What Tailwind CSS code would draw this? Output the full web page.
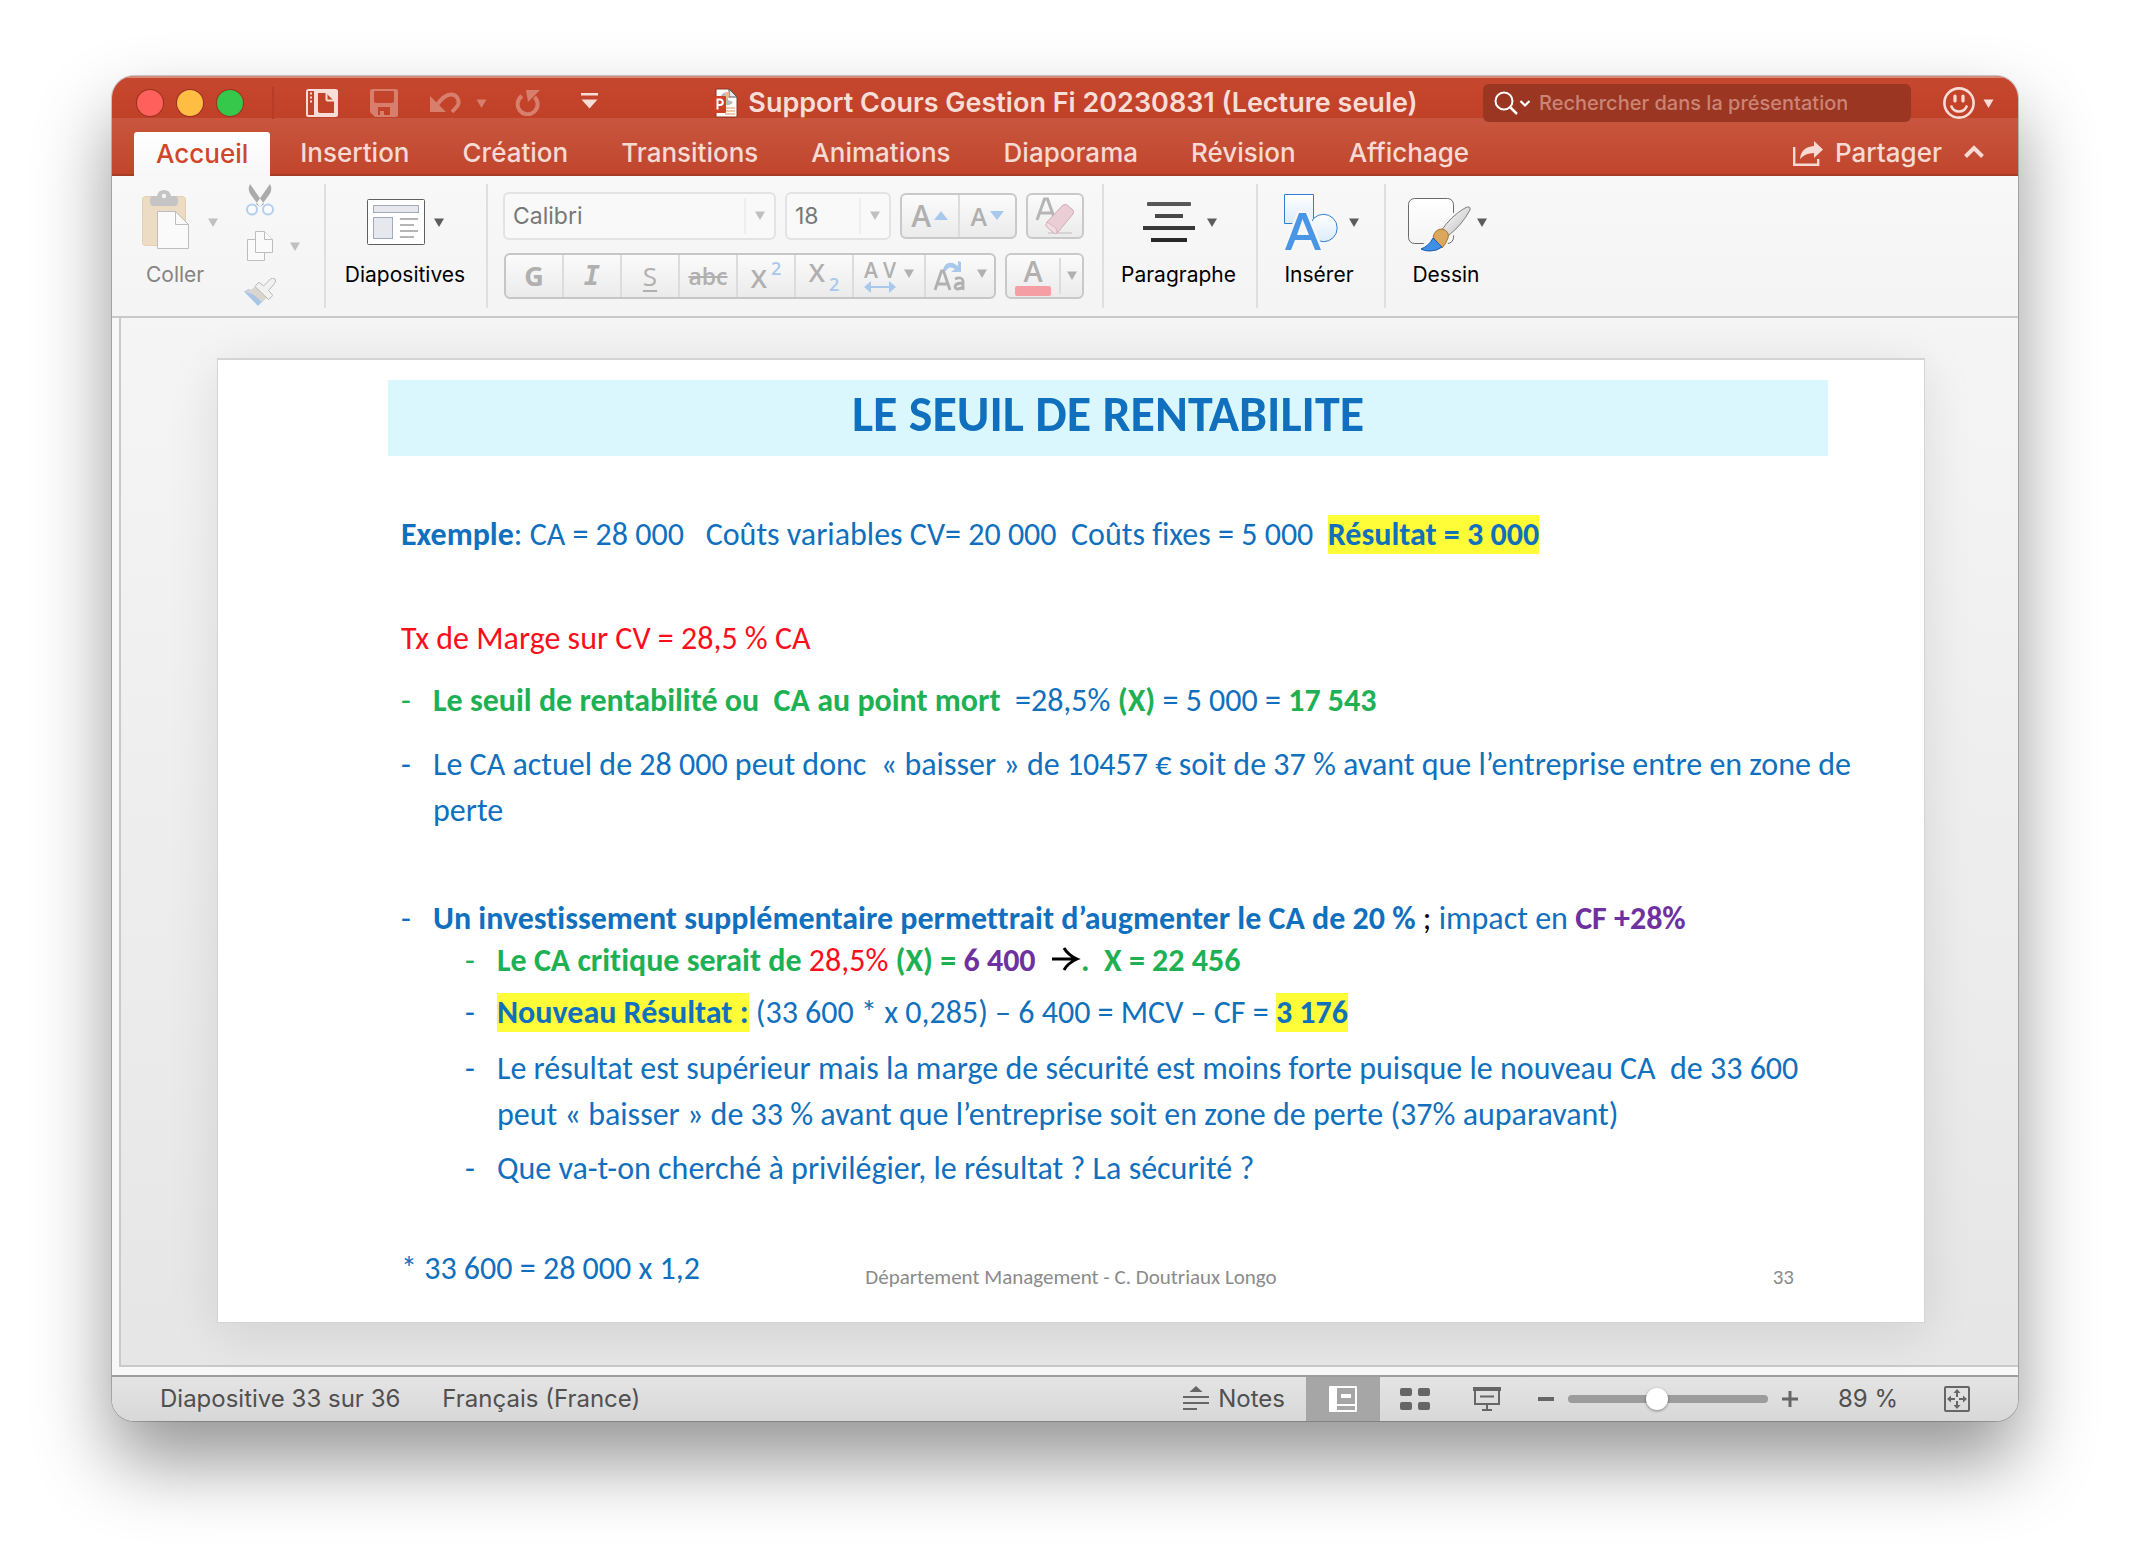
<!DOCTYPE html>
<html lang="fr">
<head>
<meta charset="utf-8">
<meta name="viewport" content="width=device-width, initial-scale=1">
<title>Support Cours Gestion Fi 20230831</title>
<script src="https://cdn.jsdelivr.net/npm/@tailwindcss/browser@4"></script>
</head>
<body class="min-h-screen bg-white px-28 pt-[76px] pb-[147px] font-[Inter,Roboto,sans-serif]">
<svg class="absolute size-0" aria-hidden="true">
  <defs>
    <symbol id="caret" viewBox="0 0 10 9"><path d="M0 .5h10L5 9z" fill="currentColor"/></symbol>
    <linearGradient id="paper" x1="0" y1="0" x2="0" y2="1"><stop offset="0" stop-color="#fff"/><stop offset="1" stop-color="#f4f4f4"/></linearGradient>
    <linearGradient id="sky" x1="0" y1="0" x2="0" y2="1"><stop offset="0" stop-color="#fff"/><stop offset="1" stop-color="#dcebfa"/></linearGradient>
    <linearGradient id="ink" x1="0" y1="0" x2="0" y2="1"><stop offset="0" stop-color="#5a5a5a"/><stop offset="1" stop-color="#262626"/></linearGradient>
    <linearGradient id="handle" x1="0" y1="0" x2="1" y2="1"><stop offset="0" stop-color="#fff"/><stop offset="1" stop-color="#bdbdbd"/></linearGradient>
  </defs>
</svg>

<div class="overflow-visible rounded-[22px] shadow-[0_0_0_1px_rgba(0,0,0,0.2),0_40px_76px_rgba(0,0,0,0.42)]">
<div class="overflow-hidden rounded-[22px]">

  <!-- Title bar -->
  <header class="relative z-10 flex h-[42px] items-center bg-linear-to-b from-[#c5482e] to-[#c14028] pt-3 pr-6 pl-[25px] text-[#f8ddd6] shadow-[inset_0_2px_0_#d98a7a]">
    <div class="flex flex-1 items-center">
      <div class="flex gap-[14px]">
        <button aria-label="Fermer" class="size-[26px] rounded-full bg-[#ff605c] shadow-[0_0_0_1px_#9b3320]"></button>
        <button aria-label="Réduire" class="size-[26px] rounded-full bg-[#ffbd44] shadow-[0_0_0_1px_#9b3320]"></button>
        <button aria-label="Agrandir" class="size-[26px] rounded-full bg-[#35c84b] shadow-[0_0_0_1px_#9b3320]"></button>
      </div>
      <span class="ml-[29px] h-8 w-[2px] bg-[#b53c25]"></span>
      <button aria-label="Volet" class="ml-8">
        <svg width="32" height="28" viewBox="0 0 32 28"><rect width="32" height="28" rx="2.500" fill="#f8ddd6"/><path d="M2 2h6v24H2z" fill="#c2432a"/><path d="M4 3.500h2v2H4zM4 7.500h2v2H4zM4 11.500h2v2H4z" fill="#f8ddd6"/><path d="M12 4h8l8 8v12H14q-2 0-2-2z" fill="#c2432a"/><path d="M20.500 3.500v7q0 1 1 1h7" fill="none" stroke="#f8ddd6" stroke-width="2"/></svg>
      </button>
      <button aria-label="Enregistrer" class="ml-8 text-[#d77e6c]">
        <svg width="28" height="28" viewBox="0 0 28 28"><path fill="currentColor" fill-rule="evenodd" d="M2 0h24q2 0 2 2v24q0 2-2 2H5l-5-5V2q0-2 2-2zM5 2q-1 0-1 1v9q0 2 2 2h16q2 0 2-2V3q0-1-1-1zM8 18v8h2v-4h4v4h6v-8z"/></svg>
      </button>
      <button aria-label="Annuler" class="ml-8 text-[#d77e6c]">
        <svg width="31" height="22" viewBox="0 0 31 22"><path d="M0 4v16h16z" fill="currentColor"/><path d="M6 14Q14 2.500 21 2.500a7.500 7.500 0 0 1 6 12L22 20" fill="none" stroke="currentColor" stroke-width="4"/></svg>
      </button>
      <button aria-label="Options d’annulation" class="ml-[15px] text-[#d77e6c]"><svg width="11" height="9"><use href="#caret"/></svg></button>
      <button aria-label="Rétablir" class="ml-7 text-[#d77e6c]">
        <svg width="26" height="26" viewBox="0 0 26 26"><path d="M7 6a10 10 0 1 0 12.500 1" fill="none" stroke="currentColor" stroke-width="4"/><path d="M11 0h14L13 12z" fill="currentColor"/></svg>
      </button>
      <button aria-label="Personnaliser" class="ml-[40px]">
        <svg class="mb-1" width="17" height="16" viewBox="0 0 17 16"><path d="M0 0h17v2.500H0zM0.500 6.500h16L8.500 15.500z" fill="currentColor"/></svg>
      </button>
    </div>
    <div class="flex items-center gap-[10px]">
      <svg width="25" height="30" viewBox="0 0 25 30"><path d="M3 1h13l8 8v20H3z" fill="#fff" stroke="#8a3422" stroke-width="1"/><path d="M16 1v8h8z" fill="#e8e8e8" stroke="#555"/><path d="M7 10a8 8 0 0 1 8-6v8l5 2a6 6 0 0 1-9 2z" fill="#b9b9b9"/><path d="M12 4h4v6l-4 2z" fill="#f2b58d"/><path d="M12 20h10M12 23h10M12 26h10" stroke="#f2b58d" stroke-width="1.300"/><rect y="8" width="13" height="17" rx="1" fill="#cf4127"/><path d="M4.500 21.500v-10h2.500a2.800 2.800 0 0 1 0 5.600H4.500" fill="none" stroke="#fff" stroke-width="2"/></svg>
      <h1 class="text-[27px] leading-8 font-semibold whitespace-nowrap">Support Cours Gestion Fi 20230831 (Lecture seule)</h1>
    </div>
    <div class="flex flex-1 items-center justify-end">
      <label class="flex h-[38px] w-[428px] items-center rounded-[6px] bg-[#9a3622] pl-[11px]">
        <svg width="37" height="24" viewBox="0 0 37 24" fill="none" stroke="#fff"><circle cx="10" cy="10" r="8.500" stroke-width="2"/><path d="M16 16l7 7" stroke-width="2.500"/><path d="M26.500 10l4.500 4.500 4.500-4.500" stroke-width="2.200"/></svg>
        <input type="text" aria-label="Rechercher" placeholder="Rechercher dans la présentation" class="ml-2 w-[308px] bg-transparent text-[20px] leading-7 font-medium text-white outline-none placeholder:text-[#cb8475]">
      </label>
      <button aria-label="Commentaires" class="ml-8 flex items-center gap-2">
        <svg width="32" height="32" viewBox="0 0 32 32" fill="none" stroke="currentColor"><circle cx="16" cy="16" r="14.600" stroke-width="2.600"/><path d="M12 9v5M20 9v5" stroke-width="3.200" stroke-linecap="round"/><path d="M8 18.500q2 6 8 6t8-6" stroke-width="2.400"/></svg>
        <svg width="11" height="9"><use href="#caret"/></svg>
      </button>
    </div>
  </header>

  <!-- Ribbon tabs -->
  <nav class="flex h-[58px] items-end border-b-2 border-[#a73c26] bg-linear-to-b from-[#c8563e] to-[#c1452c] pr-[34px] pl-[22px] text-[26px] font-medium text-[#f6dad3]">
    <div class="flex flex-1 items-end gap-[7px]">
      <button class="-mb-[2px] h-11 rounded-t-[3px] bg-linear-to-b from-white to-[#f7f7f7] px-[22px] leading-[42px] text-[#d04727]">Accueil</button>
      <button class="h-[42px] px-[23px] leading-[42px]">Insertion</button>
      <button class="h-[42px] px-[23px] leading-[42px]">Création</button>
      <button class="h-[42px] px-[23px] leading-[42px]">Transitions</button>
      <button class="h-[42px] px-[23px] leading-[42px]">Animations</button>
      <button class="h-[42px] px-[23px] leading-[42px]">Diaporama</button>
      <button class="h-[42px] px-[23px] leading-[42px]">Révision</button>
      <button class="h-[42px] px-[23px] leading-[42px]">Affichage</button>
    </div>
    <button class="flex h-[42px] items-center gap-3 leading-[40px]">
      <svg width="30" height="25" viewBox="0 0 30 25"><path d="M1.200 6v17.800h24V18" fill="none" stroke="currentColor" stroke-width="2.400"/><path d="M21 0l9 8.500-9 8.500v-5Q12 12 7 18 8 6 21 5z" fill="currentColor"/></svg>
      Partager
    </button>
    <button aria-label="Réduire le ruban" class="ml-[22px] flex h-[42px] items-center pb-1"><svg width="20" height="13" viewBox="0 0 20 13"><path d="M1.500 11.500L10 3l8.500 8.500" fill="none" stroke="currentColor" stroke-width="4"/></svg></button>
  </nav>

  <!-- Ribbon -->
  <section aria-label="Ruban" class="flex h-[142px] items-center border-b-2 border-[#c9c9c9] bg-linear-to-b from-[#f8f8f8] to-[#f4f4f4] pl-[30px] text-[21px] leading-6 text-black">
    <button class="mt-[14px] flex w-[76px] flex-col self-start text-left text-[#848484]">
      <span class="flex h-16 items-center gap-[18px] text-[#c0c0c0]">
        <svg class="mb-1" width="48" height="60" viewBox="0 0 48 60"><rect x=".5" y="6.500" width="43" height="49" rx="3" fill="#ecdcc3" stroke="#e3d0b3"/><path d="M8 10q0-4 4-4h3q1-6 7-6t7 6h3q4 0 4 4v2q0 4-4 4H12q-4 0-4-4z" fill="#c4c4c4"/><circle cx="22" cy="6" r="2.200" fill="#f5f5f5"/><path d="M15.500 21.500h18l13 13v24h-31z" fill="#fafafa" stroke="#bdbdbd"/><path d="M33.500 21.500v13h13" fill="none" stroke="#bdbdbd"/></svg>
        <svg width="10" height="9"><use href="#caret"/></svg>
      </span>
      <span class="mt-[9px] pl-[4px]">Coller</span>
    </button>
    <div class="ml-[26px] flex w-[58px] flex-col text-[#c0c0c0]">
      <button aria-label="Couper" class="flex h-[46px] items-center">
        <svg width="32" height="32" viewBox="0 0 32 32"><path d="M6 0Q3 6 7 11l9 12 4-3zM26 0q3 6-1 11l-9 12-4-3z" fill="#ababab"/><circle cx="8" cy="25.500" r="5" fill="#f8fbff" stroke="#b3cfec" stroke-width="2"/><circle cx="24" cy="25.500" r="5" fill="#f8fbff" stroke="#b3cfec" stroke-width="2"/></svg>
      </button>
      <button aria-label="Copier" class="flex h-[46px] items-center">
        <svg width="32" height="30" viewBox="0 0 32 30" fill="#fafafa" stroke="#bdbdbd"><path d="M3.500 8.500h17v21h-17z"/><path d="M11.500.5h9l8 8v13h-17z"/><path d="M20.500.5v8h8"/></svg>
        <svg class="ml-[14px]" width="10" height="9"><use href="#caret"/></svg>
      </button>
      <button aria-label="Reproduire la mise en forme" class="flex h-[46px] items-center">
        <svg width="32" height="28" viewBox="0 0 32 28"><path d="M0 13.500L5 11l14 12-5 5z" fill="#a9c6e8"/><path d="M1 13.500q6-1 10-5l12 11-5 5q-6-8-17-11z" fill="#dcd5ce"/><path d="M11 8.500l3-3.500q1-1 2 0l3.500 3 7-7q2.500-2 4.500 0 1.500 2-.5 4.500l-6 7 3.500 4q1 1 0 2l-3.500 3z" fill="#f1f1f1" stroke="#b9b9b9"/></svg>
      </button>
    </div>
    <span class="ml-[22px] h-[124px] w-[2px] bg-[#dfdfdf]"></span>
    <button class="mt-[14px] ml-[18px] flex w-[122px] flex-col items-center self-start">
      <span class="flex h-16 items-center gap-[9px] text-[#5c5c5c]">
        <svg width="58" height="46" viewBox="0 0 58 46"><rect x=".5" y=".5" width="57" height="45" rx="1" fill="#fff" stroke="#5f5f5f"/><rect x="6.500" y="6.500" width="45" height="7" fill="#e6e8ed" stroke="#a3abba"/><rect x="6.500" y="18.500" width="19" height="21" fill="#e6e8ed" stroke="#a3abba"/><path d="M33 20h18M33 26h14M33 32h18M33 38h14" stroke="#b5b5b5" stroke-width="2"/></svg>
        <svg width="10" height="9"><use href="#caret"/></svg>
      </span>
      <span class="mt-[9px]">Diapositives</span>
    </button>
    <span class="ml-5 h-[124px] w-[2px] bg-[#dfdfdf]"></span>

    <div class="mb-[2px] ml-[15px] flex flex-col gap-[13px] text-[#b0b0b0]">
      <div class="flex h-12 items-center gap-[9px]">
        <div class="flex h-12 w-[273px] items-center rounded-[6px] border-2 border-[#e3e3e3] bg-[#f9f9f9] text-[#c0c0c0]">
          <select aria-label="Police" class="h-full flex-1 appearance-none pl-2 text-[23px] text-[#777] outline-none"><option>Calibri</option></select>
          <span class="h-9 w-[2px] bg-[#efefef]"></span>
          <svg class="mx-[9px]" width="10" height="9"><use href="#caret"/></svg>
        </div>
        <div class="flex h-12 w-[106px] items-center rounded-[6px] border-2 border-[#e3e3e3] bg-[#f9f9f9] text-[#c0c0c0]">
          <select aria-label="Taille" class="h-full w-0 flex-1 appearance-none pl-2 text-[23px] text-[#777] outline-none"><option>18</option></select>
          <span class="h-9 w-[2px] bg-[#efefef]"></span>
          <svg class="mx-[9px]" width="10" height="9"><use href="#caret"/></svg>
        </div>
        <div class="flex h-[46px] w-[117px] divide-x-2 divide-[#dcdcdc] rounded-[6px] border-2 border-[#c9c9c9] bg-linear-to-b from-[#fbfbfb] to-[#ebebeb] font-['Open_Sans',sans-serif] font-semibold">
          <button aria-label="Augmenter la taille" class="flex flex-1 items-center justify-center gap-[3px] text-[30px] leading-[42px]">A<svg width="14" height="9" viewBox="0 0 14 9"><path d="M0 9L7 0l7 9z" fill="#a9c9ec"/></svg></button>
          <button aria-label="Réduire la taille" class="flex flex-1 items-center justify-center gap-[3px] text-[25px] leading-[42px]">A<svg width="14" height="9" viewBox="0 0 14 9"><path d="M0 0h14L7 9z" fill="#a9c9ec"/></svg></button>
        </div>
        <button aria-label="Effacer la mise en forme" class="flex h-[46px] w-[58px] items-center justify-center rounded-[6px] border-2 border-[#c9c9c9] bg-linear-to-b from-[#fbfbfb] to-[#ebebeb]">
          <svg width="42" height="38" viewBox="0 0 42 38"><path d="M3 23L10.500 2h3L21 23M6 16h12" fill="none" stroke="#b5b5b5" stroke-width="3"/><path d="M14 36h24" stroke="#d5d5d5" stroke-width="2"/><path d="M29 8q2-1 4 0l6 5q1 1 0 4L24 35q-2 2-4 1l-7-6q-2-1 0-5z" fill="#ebcdd5" stroke="#cfabb4"/><path d="M13 25l9 6 1 5q-2 1-3 0l-7-6q-2-1 0-5z" fill="#f3dde2" stroke="#cfabb4" stroke-width=".7"/></svg>
        </button>
      </div>
      <div class="flex h-[46px] gap-[9px] pl-[1px] font-['Open_Sans',sans-serif]">
        <div class="flex w-[492px] divide-x-2 divide-[#dcdcdc] rounded-[6px] border-2 border-[#c6c6c6] bg-linear-to-b from-[#fbfbfb] to-[#ebebeb] leading-[42px]">
          <button class="w-[58px] text-[27px] font-bold">G</button>
          <button class="w-[58px] font-['DejaVu_Sans_Mono',monospace] text-[27px] font-bold italic">I</button>
          <button class="w-[58px] text-[26px] underline decoration-2 underline-offset-4">S</button>
          <button class="w-[58px] text-[23px] font-semibold line-through decoration-2">abc</button>
          <button class="flex w-[58px] items-center justify-center text-[26px] font-semibold"><span class="pt-1">X</span><span class="pb-4 pl-1 text-[18px] leading-6 text-[#a9c9ec]">2</span></button>
          <button class="flex w-[58px] items-center justify-center text-[26px] font-semibold"><span class="pb-2">X</span><span class="pt-4 pl-1 text-[18px] leading-6 text-[#a9c9ec]">2</span></button>
          <button aria-label="Espacement des caractères" class="flex w-[72px] items-center justify-center gap-[8px]">
            <span class="flex w-[32px] flex-col items-center"><span class="flex gap-[5px] text-[21px] leading-[22px] font-semibold"><span>A</span><span>V</span></span><svg width="32" height="12" viewBox="0 0 32 12"><path d="M0 6l7-6v5h18V0l7 6-7 6V7H7v5z" fill="#a9c9ec"/></svg></span>
            <svg width="10" height="9" class="mb-1"><use href="#caret"/></svg>
          </button>
          <button aria-label="Modifier la casse" class="flex flex-1 items-center justify-center gap-[10px]">
            <svg width="34" height="32" viewBox="0 0 34 32"><path d="M10 10Q12 1 20 3l5 3V1l3 1v10H18l4-3q-6-4-9 2z" fill="#a9c9ec"/><path d="M2 30L8.500 11h2L17 30M4 24h11M22 19q7-3 8 2v9M30 23q-8 0-8 4 1 4 8 0" fill="none" stroke="#b0b0b0" stroke-width="2.800"/></svg>
            <svg width="10" height="9" class="mb-1"><use href="#caret"/></svg>
          </button>
        </div>
        <div class="flex w-[79px] items-center rounded-[6px] border-2 border-[#c9c9c9] bg-linear-to-b from-[#fbfbfb] to-[#ebebeb]">
          <button aria-label="Couleur de police" class="flex w-[52px] flex-col items-center text-[29px] leading-[30px] font-semibold">A<span class="h-[10px] w-9 rounded-[2px] bg-[#f59fa5]"></span></button>
          <span class="h-9 w-[2px] bg-[#dcdcdc]"></span>
          <svg class="ml-[6px]" width="10" height="9"><use href="#caret"/></svg>
        </div>
      </div>
    </div>
    <span class="ml-[18px] h-[124px] w-[2px] bg-[#dfdfdf]"></span>

    <button class="mt-[14px] ml-[17px] flex w-[115px] flex-col items-center self-start">
      <span class="ml-[2px] flex h-16 items-center gap-3 text-[#5c5c5c]">
        <svg width="52" height="40" viewBox="0 0 52 40" fill="url(#ink)"><path d="M5 0h42q1 0 1 1v2q0 1-1 1H5q-1 0-1-1V1q0-1 1-1zM12 12h28v4H12zM0 24h52v4H0zM8 36h36v4H8z"/></svg>
        <svg width="10" height="9"><use href="#caret"/></svg>
      </span>
      <span class="mt-[9px]">Paragraphe</span>
    </button>
    <span class="ml-5 h-[124px] w-[2px] bg-[#dfdfdf]"></span>
    <button class="mt-[14px] ml-[26px] flex w-[75px] flex-col items-center self-start">
      <span class="flex h-16 items-center gap-[11px] text-[#5c5c5c]">
        <svg width="54" height="56" viewBox="0 0 54 56"><path d="M.5.5h29v29H.5z" fill="url(#sky)" stroke="#2f7fd0"/><circle cx="39.500" cy="34" r="13.700" fill="url(#sky)" stroke="#2f7fd0"/><path d="M1 56L15 19h7l15 37h-6l-4-10H11L7 56zM13 41h12l-6.500-16z" fill="#4a96e6" stroke="#f7f7f7" stroke-width="5" paint-order="stroke" fill-rule="evenodd"/></svg>
        <svg width="10" height="9"><use href="#caret"/></svg>
      </span>
      <span class="mt-[9px] pr-[5px]">Insérer</span>
    </button>
    <span class="ml-[25px] h-[124px] w-[2px] bg-[#dfdfdf]"></span>
    <button class="mt-[14px] ml-[22px] flex w-[79px] flex-col items-center self-start">
      <span class="flex h-16 items-center gap-[6px] text-[#5c5c5c]">
        <svg class="mt-[6px]" width="63" height="54" viewBox="0 0 63 54"><rect x=".5" y=".5" width="45" height="45" rx="6" fill="url(#paper)" stroke="#6a6a6a"/><path d="M32 33Q42 18 57 9q7-2 5 4-8 15-22 27-4 12-17 12-7 0-10-2 8-5 10-10 3-7 9-7z" fill="#f7f7f7" stroke="#f7f7f7" stroke-width="4"/><path d="M33 33Q43 18 57 10q6-3 5 2-8 15-22 26z" fill="url(#handle)" stroke="#7d7d7d"/><path d="M25 39q2-8 9-8 8 2 6 9-2 6-6 10z" fill="#dba75a" stroke="#a8752c"/><path d="M25 40l9 9q-5 4-12 4-6 0-9-2 8-3 12-11z" fill="#3f8ee8" stroke="#1c5fae"/></svg>
        <svg width="10" height="9"><use href="#caret"/></svg>
      </span>
      <span class="mt-[9px] pr-[3px]">Dessin</span>
    </button>
  </section>

  <!-- Slide area -->
  <main class="bg-[#f8f8f8] pb-2 pl-[7px]">
    <div class="border-b-2 border-l-2 border-[#c9c9c9] bg-linear-to-b from-[#f5f5f5] to-[#e6e6e6] pt-[40px] pr-[93px] pb-[42px] pl-24">
      <article class="border border-t-2 border-[#d4d4d4] bg-white pt-5 pb-[30px] font-[Carlito,Calibri,Lato,sans-serif] text-[32px] leading-[46px] text-[#1070be] shadow-[0_8px_48px_rgba(0,0,0,0.1)] [font-variant-ligatures:none]">
        <h2 class="mr-24 ml-[170px] bg-[#daf7fe] pb-2 text-center text-[50px] leading-[68px] font-bold">LE SEUIL DE RENTABILITE</h2>
        <div class="mt-14 mr-16 ml-[183px]">
          <p><b>Exemple</b>: CA = 28 000 &nbsp; Coûts variables CV= 20 000&nbsp; Coûts fixes = 5 000&nbsp; <b class="bg-[#fffd38]">Résultat = 3 000</b></p>
          <p class="mt-[58px] text-[#fc0d1b]">Tx de Marge sur CV = 28,5 % CA</p>
          <ul>
            <li class="mt-4 flex"><span class="w-8 shrink-0 text-[#1eb154]">-</span><p><b class="text-[#1eb154]">Le seuil de rentabilité ou&nbsp; CA au point mort&nbsp; </b>=28,5% <b class="text-[#1eb154]">(X)</b> = 5 000 = <b class="text-[#1eb154]">17 543</b></p></li>
            <li class="mt-[18px] flex"><span class="w-8 shrink-0">-</span><p>Le CA actuel de 28 000 peut donc&nbsp; « baisser » de 10457 € soit de 37 % avant que l’entreprise entre en zone de perte</p></li>
            <li class="mt-16 flex leading-[42px]"><span class="w-8 shrink-0">-</span><p><b>Un investissement supplémentaire permettrait d’augmenter le CA de 20 %</b> <span class="text-black">;</span> impact en <b class="text-[#6f30a0]">CF +28%</b></p></li>
          </ul>
          <ul class="ml-16">
            <li class="flex leading-[42px]"><span class="w-8 shrink-0 text-[#1eb154]">-</span><p class="font-bold text-[#1eb154]">Le CA critique serait de <span class="font-normal text-[#fc0d1b]">28,5%</span> (X) = <span class="text-[#6f30a0]">6 400</span>&nbsp; <svg class="inline-block h-6 w-[31px] align-baseline" viewBox="0 0 31 24" role="img" aria-label="flèche"><path d="M2 12h24M14 1q4 7 13 11-9 4-13 11" fill="none" stroke="#000" stroke-width="3"/></svg>.&nbsp; X = 22 456</p></li>
            <li class="mt-2 flex"><span class="w-8 shrink-0">-</span><p><b class="bg-[#fffd38]">Nouveau Résultat :</b> (33 600 * x 0,285) – 6 400 = MCV – CF = <b class="bg-[#fffd38]">3 176</b></p></li>
            <li class="mt-[10px] flex"><span class="w-8 shrink-0">-</span><p>Le résultat est supérieur mais la marge de sécurité est moins forte puisque le nouveau CA&nbsp; de 33 600 peut « baisser » de 33 % avant que l’entreprise soit en zone de perte (37% auparavant)</p></li>
            <li class="mt-2 flex"><span class="w-8 shrink-0">-</span><p>Que va-t-on cherché à privilégier, le résultat ? La sécurité ?</p></li>
          </ul>
        </div>
        <footer class="mt-[54px] grid grid-cols-3 items-end">
          <p class="pl-[183px]">* 33 600 = 28 000 x 1,2</p>
          <p class="text-center text-[21px] leading-[30px] text-[#8b8b8b]">Département Management - C. Doutriaux Longo</p>
          <p class="pr-[130px] text-right text-[21px] leading-[30px] text-[#8b8b8b]">33</p>
        </footer>
      </article>
    </div>
  </main>

  <!-- Status bar -->
  <footer class="flex h-[46px] items-center border-t-2 border-[#9d9d9d] bg-linear-to-b from-[#e4e4e4] to-[#d8d8d8] pr-12 pl-12 text-[24px] leading-[44px] text-[#505050]">
    <span>Diapositive 33 sur 36</span>
    <button class="ml-[42px]">Français (France)</button>
    <span class="flex-1"></span>
    <button class="mr-[21px] flex items-center gap-[9px]">
      <svg width="26" height="26" viewBox="0 0 26 26"><path d="M13 0l6.500 6h-13zM0 10h26v2H0zM0 16h26v2H0zM0 22h14v2H0z" fill="#666"/></svg>Notes
    </button>
    <button aria-label="Normal" class="flex h-11 w-[74px] items-center justify-center bg-[#a6a6a6]">
      <svg width="28" height="26" viewBox="0 0 28 26"><path fill="#fff" fill-rule="evenodd" d="M1 0h26q1 0 1 1v24q0 1-1 1H1q-1 0-1-1V1q0-1 1-1zM8 2v16h18V2zM8 20v4h18v-4z"/><path d="M12 8h10v4H12z" fill="#fff"/></svg>
    </button>
    <button aria-label="Trieuse" class="ml-5"><svg width="30" height="22" viewBox="0 0 30 22" fill="#666"><rect width="12" height="8" rx="2"/><rect x="18" width="12" height="8" rx="2"/><rect y="14" width="12" height="8" rx="2"/><rect x="18" y="14" width="12" height="8" rx="2"/></svg></button>
    <button aria-label="Diaporama" class="ml-[42px]"><svg width="30" height="24" viewBox="0 0 30 24"><path d="M1 0h28v4H1z" fill="#666"/><path d="M3 4v13h24V4M8 9.500h14M15 17v6M10 23h10" fill="none" stroke="#666" stroke-width="2"/></svg></button>
    <button aria-label="Zoom arrière" class="ml-9"><svg width="16" height="16" viewBox="0 0 16 16"><path d="M0 6h16v4H0z" fill="#666"/></svg></button>
    <input type="range" aria-label="Zoom" min="0" max="100" value="44" class="mx-[14px] h-2 w-[200px] appearance-none rounded-full bg-[#9c9c9c] [&::-webkit-slider-thumb]:size-[22px] [&::-webkit-slider-thumb]:appearance-none [&::-webkit-slider-thumb]:rounded-full [&::-webkit-slider-thumb]:bg-white [&::-webkit-slider-thumb]:shadow-[0_1px_3px_rgba(0,0,0,0.4)]">
    <button aria-label="Zoom avant"><svg width="16" height="16" viewBox="0 0 16 16"><path d="M0 6.500h6.500V0h3v6.500H16v3H9.500V16h-3V9.500H0z" fill="#666"/></svg></button>
    <output class="ml-10">89 %</output>
    <button aria-label="Ajuster à la fenêtre" class="ml-[46px]"><svg width="26" height="26" viewBox="0 0 26 26"><rect x="1" y="1" width="24" height="24" rx="1" fill="none" stroke="#666" stroke-width="2"/><path d="M13 3l3.500 4h-2.500v4h-2V7H9.500zM13 23l3.500-4h-2.500v-4h-2v4H9.500zM3 13l4-3.500V12h4v2H7v2.500zM23 13l-4-3.500V12h-4v2h4v2.500z" fill="#666"/></svg></button>
  </footer>
</div>
</div>
</body>
</html>
